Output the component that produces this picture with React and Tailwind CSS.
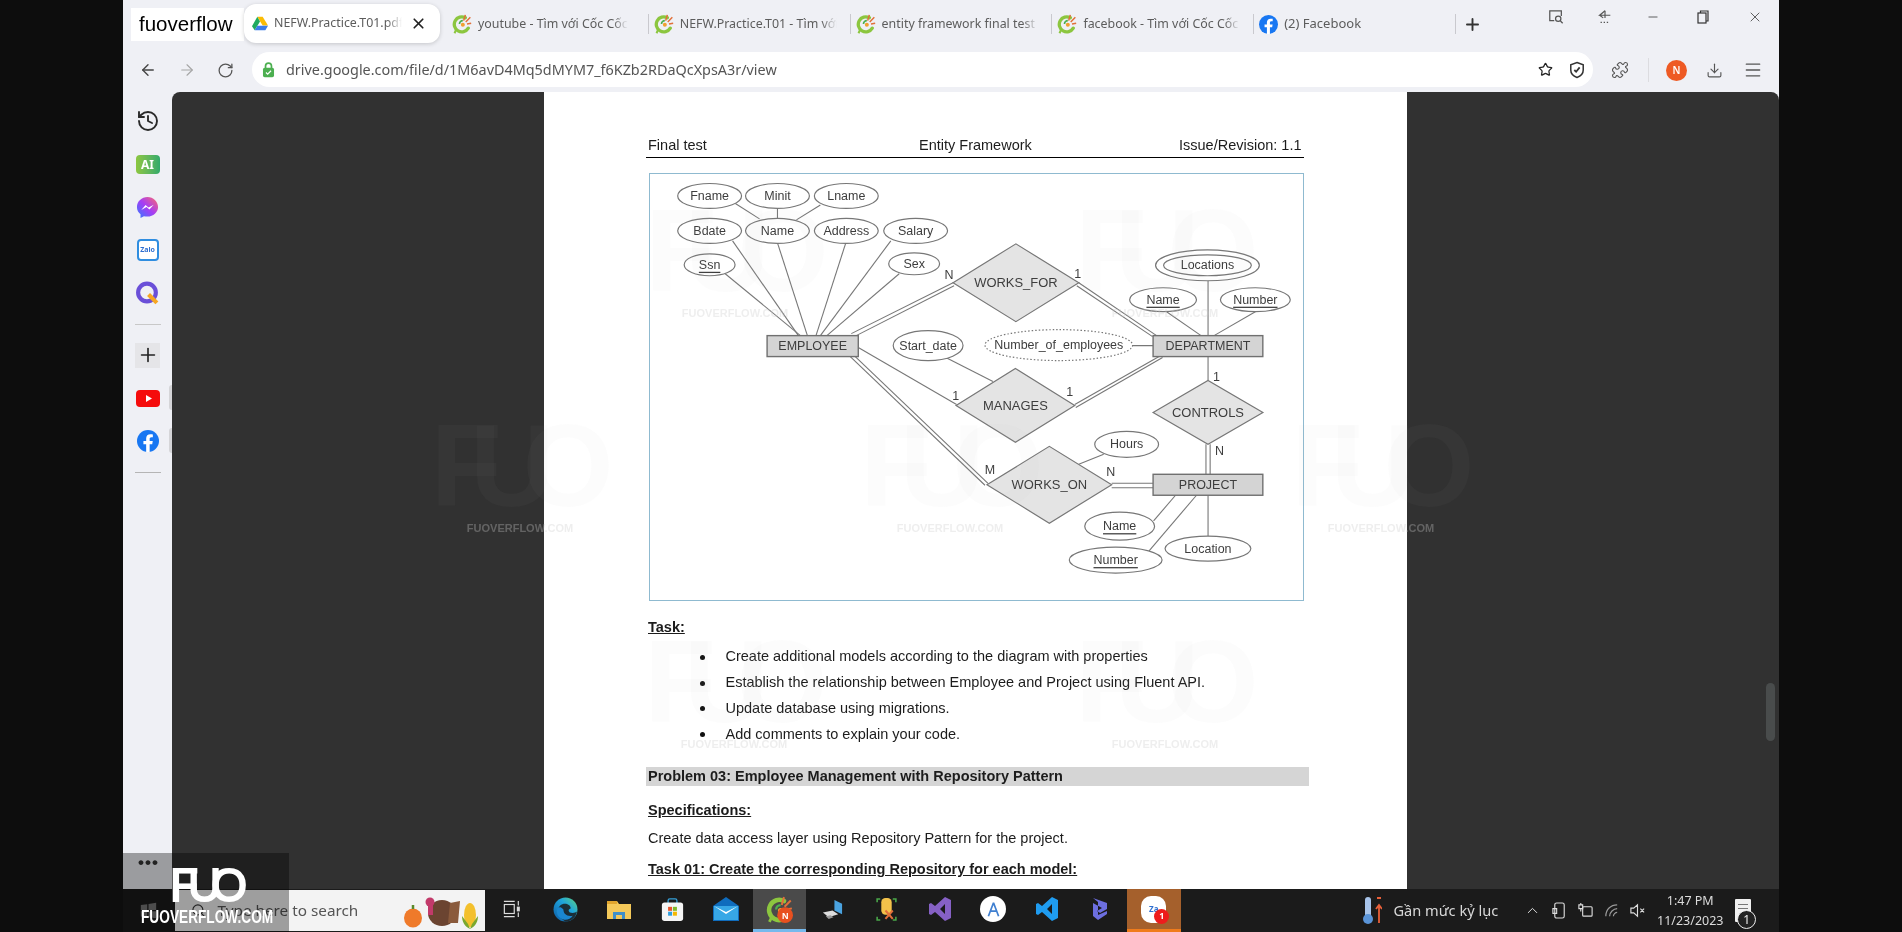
import React from "react";
import {
  ArrowLeft,
  ArrowRight,
  ChevronUp,
  Download,
  History,
  Menu,
  Minus,
  Plus,
  Puzzle,
  RotateCw,
  Search,
  Star,
  X,
} from "lucide-react";

function DriveIcon() {
  return (
    <svg viewBox="0 0 24 22" className="h-[15px] w-[16px] shrink-0">
      <path d="M8 1h8l8 13h-8z" fill="#fbbc04" />
      <path d="M8 1 0 15l4 6 8-13z" fill="#1faa5f" />
      <path d="M8 14.5h16L20 21H4z" fill="#3b7de9" />
    </svg>
  );
}

function CocCocIcon({ badge }) {
  return (
    <svg viewBox="0 0 24 24" className={badge ? "h-[27px] w-[27px]" : "h-[20px] w-[20px] shrink-0"}>
      <path d="M16 4.5A9 9 0 1 0 19.5 17" fill="none" stroke="#8cc63f" strokeWidth="4" strokeLinecap="round" />
      <path d="M9 12a4 4 0 0 1 4-4" fill="none" stroke="#4caf50" strokeWidth="2" />
      <path d="M14 8 16 1M16.5 9.5 22 4M18 12l5-1" stroke="#e2703a" strokeWidth="1.8" />
      <path d="M5 19 3 23" stroke="#8cc63f" strokeWidth="2.5" />
      <circle cx="13" cy="13" r="2.4" fill="#f0a030" />
      {badge && <circle cx="17" cy="17" r="7" fill="#e8501f" />}
      {badge && (
        <text x="17" y="20" textAnchor="middle" fontSize="8" fontWeight="700" fill="#fff" fontFamily="Liberation Sans">
          N
        </text>
      )}
    </svg>
  );
}

function FacebookIcon({ size }) {
  return (
    <svg viewBox="0 0 24 24" className={size}>
      <circle cx="12" cy="12" r="12" fill="#1877f2" />
      <path
        d="M16.6 15.5 17.2 12h-3.4V9.7c0-1 .5-1.9 2-1.9h1.5v-3s-1.4-.2-2.7-.2c-2.8 0-4.6 1.7-4.6 4.7V12H7v3.5h3V24h3.8v-8.5z"
        fill="#fff"
      />
    </svg>
  );
}

function BrowserTab({ icon, title, last }) {
  return (
    <div className="flex h-[38px] w-[201.8px] items-center gap-[6px] border-r border-[#cfcfd4] pl-[5px] pr-[13px] [border-image:linear-gradient(transparent_25%,#c9c9ce_25%,#c9c9ce_75%,transparent_75%)_1]">
      {icon}
      <span
        className={`overflow-hidden whitespace-nowrap text-[12.4px] text-[#5c5c5c] ${
          last ? "text-[13px]" : "[mask-image:linear-gradient(to_right,black_90%,transparent)]"
        }`}
      >
        {title}
      </span>
    </div>
  );
}

function SidebarSlot({ children }) {
  return <div className="flex h-[43px] w-full items-center justify-center">{children}</div>;
}

function TaskIcon({ children, active, orange }) {
  return (
    <div
      className={`flex h-[43px] w-[53.5px] shrink-0 items-center justify-center border-b-[3px] ${
        active ? "border-[#76b9ed] bg-[#4a4a4a]" : orange ? "border-[#f07c1c] bg-[#a5602c]" : "border-transparent"
      }`}
    >
      {children}
    </div>
  );
}

function Label({ x, y, text, underline, size = 12.5 }) {
  return (
    <text
      x={x}
      y={y}
      textAnchor="middle"
      dominantBaseline="central"
      fontSize={size}
      fill="#3d3d3d"
      fontFamily="Liberation Sans"
      textDecoration={underline ? "underline" : undefined}
    >
      {text}
    </text>
  );
}

function Ell({ cx, cy, rx, ry, label, underline, dotted }) {
  return (
    <g>
      <ellipse
        cx={cx}
        cy={cy}
        rx={rx}
        ry={ry}
        fill="#fff"
        stroke="#777"
        strokeWidth="1.2"
        strokeDasharray={dotted ? "1.5 2" : undefined}
      />
      {label && <Label x={cx} y={cy} text={label} underline={underline} />}
    </g>
  );
}

function Box({ x, y, w, h, label }) {
  return (
    <g>
      <rect x={x} y={y} width={w} height={h} fill="#d4d4d4" stroke="#707070" strokeWidth="1.4" />
      <Label x={x + w / 2} y={y + h / 2} text={label} />
    </g>
  );
}

function Diamond({ l, r, t, b, label }) {
  const cx = (l + r) / 2;
  const cy = (t + b) / 2;
  return (
    <g>
      <polygon points={`${l},${cy} ${cx},${t} ${r},${cy} ${cx},${b}`} fill="#e4e4e4" stroke="#777" strokeWidth="1.2" />
      <Label x={cx} y={cy} text={label} size={13} />
    </g>
  );
}

const singleLines = [
  [734, 203, 759, 219],
  [777, 208, 777, 219],
  [820, 205, 796, 220],
  [732, 241, 798, 336],
  [777, 243, 807, 336],
  [845.5, 243, 815.6, 336],
  [890.6, 241, 820, 336],
  [899, 274, 826.5, 336],
  [724.6, 274, 800, 336],
  [858, 348, 956.5, 405],
  [945.7, 358, 993, 382],
  [1132, 346, 1153.5, 346],
  [1208.6, 357, 1208.6, 381],
  [1104, 455, 1079, 465],
  [1176, 496, 1154, 521.7],
  [1197, 496, 1149.5, 551.7],
  [1208.6, 496, 1208.6, 537],
  [1208.6, 281, 1208.6, 336],
  [1167, 312, 1201.6, 336],
  [1256, 312, 1214.6, 336],
];

const doubleLines = [
  [851, 334, 953, 283, 854, 337, 954, 286],
  [1079, 283, 1157, 336, 1077, 286, 1153, 337],
  [1075, 405, 1159.5, 357, 1076, 408, 1163, 358],
  [850, 357, 985, 486, 855, 357, 988, 484],
  [1112, 484, 1153.5, 484, 1112, 488.5, 1153.5, 488.5],
  [1206.5, 445, 1206.5, 475, 1210.7, 445, 1210.7, 475],
];

function ErDiagram() {
  return (
    <svg viewBox="649.5 174 654 427" className="h-full w-full">
      {singleLines.map((l, i) => (
        <line key={i} x1={l[0]} y1={l[1]} x2={l[2]} y2={l[3]} stroke="#777" strokeWidth="1.1" />
      ))}
      {doubleLines.map((l, i) => (
        <g key={i} stroke="#777" strokeWidth="1.1">
          <line x1={l[0]} y1={l[1]} x2={l[2]} y2={l[3]} />
          <line x1={l[4]} y1={l[5]} x2={l[6]} y2={l[7]} />
        </g>
      ))}
      <Ell cx={709} cy={196} rx={32} ry={12.5} label="Fname" />
      <Ell cx={777} cy={196} rx={32} ry={12.5} label="Minit" />
      <Ell cx={846} cy={196} rx={32} ry={12.5} label="Lname" />
      <Ell cx={709} cy={231} rx={32} ry={12.5} label="Bdate" />
      <Ell cx={777} cy={231} rx={32} ry={12.5} label="Name" />
      <Ell cx={846} cy={231} rx={32} ry={12.5} label="Address" />
      <Ell cx={915.5} cy={231} rx={32} ry={12.5} label="Salary" />
      <Ell cx={709} cy={265} rx={25.5} ry={11} label="Ssn" underline />
      <Ell cx={914} cy={264} rx={25.5} ry={11} label="Sex" />
      <Ell cx={1208} cy={265.5} rx={52} ry={15.5} />
      <Ell cx={1208} cy={265.5} rx={44} ry={10.5} label="Locations" />
      <Ell cx={1163.5} cy={300} rx={33.5} ry={12} label="Name" underline />
      <Ell cx={1256} cy={300} rx={35} ry={12} label="Number" underline />
      <Ell cx={928} cy={346} rx={35} ry={15} label="Start_date" />
      <Ell cx={1059} cy={345.5} rx={74} ry={15.5} label="Number_of_employees" dotted />
      <Ell cx={1127} cy={445} rx={32} ry={13} label="Hours" />
      <Ell cx={1120} cy={527} rx={35} ry={14} label="Name" underline />
      <Ell cx={1116} cy={561} rx={46.5} ry={13} label="Number" underline />
      <Ell cx={1208.5} cy={549.5} rx={43} ry={12.5} label="Location" />
      <Box x={766.6} y={336} w={91.4} h={21} label="EMPLOYEE" />
      <Box x={1153.5} y={336} w={110} h={21} label="DEPARTMENT" />
      <Box x={1153.5} y={475} w={110} h={21} label="PROJECT" />
      <Diamond l={953} r={1079} t={244} b={322} label="WORKS_FOR" />
      <Diamond l={956} r={1075} t={369} b={443} label="MANAGES" />
      <Diamond l={1153.5} r={1263.6} t={381} b={445} label="CONTROLS" />
      <Diamond l={987} r={1112} t={447} b={524} label="WORKS_ON" />
      <Label x={949} y={275} text="N" />
      <Label x={1078} y={274} text="1" />
      <Label x={955.7} y={397} text="1" />
      <Label x={1070} y={393} text="1" />
      <Label x={1217} y={377} text="1" />
      <Label x={1220} y={452} text="N" />
      <Label x={990} y={471} text="M" />
      <Label x={1111} y={473} text="N" />
    </svg>
  );
}

function Watermark({ className }) {
  return (
    <div className={`pointer-events-none absolute flex w-[200px] flex-col items-center ${className}`}>
      <span className="-ml-[28px] h-[107px] text-[117px] font-bold leading-[104px] tracking-[-32px] text-[rgba(170,170,170,0.04)] [font-family:'Liberation_Sans']">
        FUO
      </span>
      <span className="text-[11px] font-bold leading-[14px] text-[rgba(203,203,203,0.33)] [font-family:'Liberation_Sans']">
        FUOVERFLOW.COM
      </span>
    </div>
  );
}

const tasks = [
  "Create additional models according to the diagram with properties",
  "Establish the relationship between Employee and Project using Fluent API.",
  "Update database using migrations.",
  "Add comments to explain your code.",
];

export default function App() {
  return (
    <div className="relative h-[932px] w-[1902px] overflow-hidden bg-[#0d0d0d] px-[123px] blur-[0.4px] [font-family:'Noto_Sans',sans-serif]">
      <div className="flex h-full w-[1656px] flex-col bg-[#eff0f5]">
        {/* tab strip */}
        <div className="flex h-[48px] items-start pl-[8px]">
          <div className="mt-[8px] flex h-[33px] w-[113px] items-center bg-white pl-[8px] text-[20.5px] text-black [font-family:'Liberation_Sans']">
            fuoverflow
          </div>
          <div className="mt-[4px] flex h-[39px] w-[196px] shrink-0 items-center gap-[6px] rounded-[12px] bg-white pl-[8px] pr-[13px] shadow-[0_1px_4px_rgba(0,0,0,0.18)]">
            <DriveIcon />
            <span className="w-[128px] overflow-hidden whitespace-nowrap text-[12.4px] text-[#5c5c5c] [mask-image:linear-gradient(to_right,black_88%,transparent)]">
              NEFW.Practice.T01.pdf
            </span>
            <X size={17} strokeWidth={2.4} className="ml-auto text-[#222]" />
          </div>
          <div className="ml-[7px] mt-[5px] flex">
            <BrowserTab icon={<CocCocIcon />} title="youtube - Tìm với Cốc Cốc" />
            <BrowserTab icon={<CocCocIcon />} title="NEFW.Practice.T01 - Tìm với Cốc Cốc" />
            <BrowserTab icon={<CocCocIcon />} title="entity framework final test - Tìm" />
            <BrowserTab icon={<CocCocIcon />} title="facebook - Tìm với Cốc Cốc - Tìm" />
            <BrowserTab icon={<FacebookIcon size="h-[19px] w-[19px] shrink-0" />} title="(2) Facebook" last />
          </div>
          <Plus size={19} strokeWidth={2.4} className="ml-[7px] mt-[15px] text-[#333]" />
          <div className="ml-auto flex h-[33px] items-center text-[#555]">
            <svg viewBox="0 0 18 18" className="mr-[33px] h-[16px] w-[16px]" fill="none" stroke="#555" strokeWidth="1.4">
              <path d="M7 13H2V2h13v6" />
              <circle cx="11.5" cy="11" r="3" />
              <path d="m14 13.5 2.5 2.5" />
            </svg>
            <svg viewBox="0 0 18 18" className="mr-[33px] h-[16px] w-[16px]" fill="none" stroke="#555" strokeWidth="1.3">
              <path d="M9 2 3 7h12M3 7l4 3" />
              <path d="M9 2v8M4 15h1.5m2 0H9m2 0h1.5" />
            </svg>
            <Minus size={14} strokeWidth={1.6} className="mr-[36px]" />
            <svg viewBox="0 0 14 14" className="mr-[37px] h-[14px] w-[14px]" fill="none" stroke="#333" strokeWidth="1.2">
              <rect x="2" y="3" width="8" height="10" />
              <path d="M4.5 3V1H12v10h-2" />
            </svg>
            <X size={16} strokeWidth={1.4} className="mr-[16px]" />
          </div>
        </div>

        {/* toolbar */}
        <div className="flex h-[44px] items-start pl-[16px] pt-[4px]">
          <div className="flex h-[36px] items-center">
            <ArrowLeft size={18} strokeWidth={1.8} className="text-[#444]" />
            <ArrowRight size={18} strokeWidth={1.5} className="ml-[21px] text-[#a5a5a5]" />
            <RotateCw size={17} strokeWidth={1.8} className="ml-[21px] text-[#555]" />
          </div>
          <div className="ml-[18px] flex h-[35px] w-[1341px] items-center rounded-full bg-white pl-[9px] pr-[8px]">
            <svg viewBox="0 0 16 20" className="h-[17px] w-[15px]">
              <path d="M4.5 9V6a3.5 3.5 0 0 1 7 0v3" fill="none" stroke="#4caf50" strokeWidth="2" />
              <rect x="1.5" y="8" width="13" height="11" rx="2" fill="#4caf50" />
              <path d="m5 13.5 2 2 4-4" fill="none" stroke="#fff" strokeWidth="1.4" />
            </svg>
            <span className="ml-[10px] text-[14.4px] text-[#555]">
              drive.google.com/file/d/1M6avD4Mq5dMYM7_f6KZb2RDaQcXpsA3r/view
            </span>
            <Star size={15} strokeWidth={2} className="ml-auto text-[#222]" />
            <svg viewBox="0 0 18 20" className="ml-[16px] h-[18px] w-[16px]" fill="none" stroke="#333" strokeWidth="1.7">
              <path d="M9 1.5 16 4v6c0 4-3 7-7 8.5C5 17 2 14 2 10V4z" />
              <path d="m6 10 2 2 4-5" strokeWidth="2" />
            </svg>
          </div>
          <div className="flex h-[36px] items-center">
            <Puzzle size={18} strokeWidth={1.5} className="ml-[18px] text-[#555]" />
            <div className="ml-[19px] h-[24px] w-px bg-[#dcdce0]" />
            <div className="ml-[17px] flex h-[21px] w-[21px] items-center justify-center rounded-full bg-[#ee5a24] text-[10px] font-semibold text-white">
              N
            </div>
            <Download size={17} strokeWidth={1.6} className="ml-[19px] text-[#555]" />
            <Menu size={20} strokeWidth={1.6} className="ml-[20px] text-[#555]" />
          </div>
        </div>

        {/* main area */}
        <div className="flex h-[797px]">
          <div className="relative flex w-[49px] shrink-0 flex-col items-center pt-[7.5px]">
            <SidebarSlot>
              <History size={24} strokeWidth={1.9} className="text-[#2a2a2a]" />
            </SidebarSlot>
            <SidebarSlot>
              <div className="relative mt-[1px] flex h-[19px] w-[24px] items-center justify-center rounded-[4px] bg-gradient-to-r from-[#8cc63f] to-[#2faa6a] text-[12px] font-bold text-white">
                AI
              </div>
            </SidebarSlot>
            <SidebarSlot>
              <svg viewBox="0 0 24 24" className="h-[23px] w-[23px]">
                <defs>
                  <linearGradient id="msgr" x1="0" y1="1" x2="1" y2="0">
                    <stop offset="0" stopColor="#2f7bff" />
                    <stop offset="0.5" stopColor="#a63df5" />
                    <stop offset="1" stopColor="#ff6a6a" />
                  </linearGradient>
                </defs>
                <path d="M12 1C6 1 1 5.5 1 11.5c0 3.2 1.4 5.8 3.7 7.6V23l3.6-2c1.2.3 2.4.5 3.7.5 6 0 11-4.5 11-10S18 1 12 1z" fill="url(#msgr)" />
                <path d="m5.5 14.5 4.5-5 3 2.5 5.500-3-4.500 5-3-2.500z" fill="#fff" />
              </svg>
            </SidebarSlot>
            <SidebarSlot>
              <div className="flex h-[22px] w-[22px] items-center justify-center rounded-[4px] border-[2.5px] border-[#2f8de0] bg-white text-[7px] font-bold text-[#2f6fd0]">
                Zalo
              </div>
            </SidebarSlot>
            <SidebarSlot>
              <svg viewBox="0 0 24 24" className="h-[25px] w-[25px]">
                <circle cx="11.5" cy="11" r="8.5" fill="none" stroke="#6a4fd8" strokeWidth="4" />
                <path d="m13 13 8 8" stroke="#f6a623" strokeWidth="4" />
              </svg>
            </SidebarSlot>
            <div className="mb-[17.5px] mt-[9.5px] h-px w-[26px] bg-[#c8c8c8]" />
            <div className="flex h-[25px] w-[25px] items-center justify-center bg-[#e5e5e8]">
              <Plus size={22} strokeWidth={1.8} className="text-[#222]" />
            </div>
            <div className="mt-[9px] flex h-[43px] w-full items-center justify-center">
              <svg viewBox="0 0 24 17" className="h-[17px] w-[24px]">
                <rect width="24" height="17" rx="4" fill="#f50c0c" />
                <path d="m10 5 6 3.5-6 3.5z" fill="#fff" />
              </svg>
            </div>
            <SidebarSlot>
              <FacebookIcon size="h-[22px] w-[22px]" />
            </SidebarSlot>
            <div className="mt-[9px] h-px w-[26px] bg-[#b5b5b5]" />
            <div className="absolute left-[46px] top-[293px] h-[25px] w-[3px] rounded-l bg-[#d5d5d8]" />
            <div className="absolute left-[46px] top-[336px] h-[25px] w-[3px] rounded-l bg-[#d5d5d8]" />
          </div>

          <div className="relative flex flex-1 justify-center overflow-hidden rounded-t-[8px] bg-[#313131]">
            <div className="h-full w-[863px] shrink-0 bg-white pl-[102px] pt-[43px] text-[14.5px] text-[#1c1c1c] [font-family:'Liberation_Sans']">
              <div className="w-[665px]">
                <div className="flex h-[23px] w-[657.5px] items-start border-b-[1.5px] border-black px-[2px] leading-[20px]">
                  <span className="w-[271px]">Final test</span>
                  <span>Entity Framework</span>
                  <span className="ml-auto">Issue/Revision: 1.1</span>
                </div>
                <div className="ml-[2.5px] mt-[14.5px] h-[428px] w-[655px] border border-[#8fbad0]">
                  <ErDiagram />
                </div>
                <p className="ml-[2px] mt-[16px] h-[20px] font-bold underline">Task:</p>
                <ul className="mt-[8px]">
                  {tasks.map((item) => (
                    <li key={item} className="flex h-[25.7px] items-center pl-[54px]">
                      <span className="h-[5px] w-[5px] rounded-full bg-[#111]" />
                      <span className="ml-[20.5px]">{item}</span>
                    </li>
                  ))}
                </ul>
                <div className="mt-[20px] flex h-[19px] w-[663px] items-center bg-[#d5d5d5] pl-[2px] font-bold">
                  Problem 03: Employee Management with Repository Pattern
                </div>
                <p className="ml-[2px] mt-[13.5px] h-[20px] font-bold underline">Specifications:</p>
                <p className="ml-[2px] mt-[8.5px] h-[20px]">Create data access layer using Repository Pattern for the project.</p>
                <p className="ml-[2px] mt-[11px] h-[20px] font-bold underline">Task 01: Create the corresponding Repository for each model:</p>
              </div>
            </div>
            <div className="absolute left-[1594px] top-[591px] h-[58px] w-[9px] rounded-full bg-[#494c4c]" />
          </div>
        </div>

        {/* windows taskbar */}
        <div className="flex h-[43px] items-center bg-[#1b1b1b] text-white">
          <div className="flex w-[51.5px] shrink-0 justify-center">
            <svg viewBox="0 0 20 20" className="h-[17px] w-[17px]" fill="#777">
              <path d="M1 3.5 8.5 2.5V9.5H1zM10 2.3 19 1V9.5H10zM1 11h7.5v7L1 17zM10 11h9v8l-9-1.2z" />
            </svg>
          </div>
          <div className="flex h-[41px] w-[310.5px] shrink-0 items-center bg-[#f3f3f3] pl-[16px] text-[15.3px] text-[#555]">
            <Search size={15} strokeWidth={1.8} className="text-[#333]" />
            <span className="ml-[12px] whitespace-nowrap">Type here to search</span>
            <svg viewBox="0 0 86 40" className="ml-auto mr-[5px] h-[40px] w-[86px]">
              <ellipse cx="19" cy="27" rx="9" ry="9.5" fill="#ef7a2a" />
              <path d="M19 18v-4" stroke="#5a8a2a" strokeWidth="2.5" />
              <ellipse cx="48" cy="22" rx="14" ry="13" fill="#6b4431" />
              <path d="M56 12 66 10 64 32 54 32z" fill="#8a5a3c" />
              <circle cx="36" cy="11" r="4.5" fill="#c23a6a" />
              <path d="M34 14h5v10h-5z" fill="#c23a6a" />
              <ellipse cx="76" cy="24" rx="6" ry="12" fill="#f3c02d" />
              <path d="M76 38c-6-3-8-8-8-13l6 8zM76 38c6-3 8-8 8-13l-6 8z" fill="#7aa82f" />
            </svg>
          </div>
          <TaskIcon>
            <svg viewBox="0 0 20 20" className="h-[18px] w-[18px]" fill="none" stroke="#ddd" strokeWidth="1.3">
              <path d="M1 1.5h12M1 18.5h12" />
              <rect x="1.5" y="5" width="11" height="10" />
              <path d="M17 1v5M17 14v5" />
              <rect x="16" y="8" width="2" height="4" fill="#ddd" />
            </svg>
          </TaskIcon>
          <TaskIcon>
            <svg viewBox="0 0 24 24" className="h-[25px] w-[25px]">
              <defs>
                <linearGradient id="edge" x1="0" y1="1" x2="1" y2="0">
                  <stop offset="0" stopColor="#0c59a4" />
                  <stop offset="0.6" stopColor="#1fa5dc" />
                  <stop offset="1" stopColor="#5fd37d" />
                </linearGradient>
              </defs>
              <circle cx="12" cy="12" r="11.5" fill="url(#edge)" />
              <path d="M23 14c-2 2-8 2-8-1 0-1 1-2 2-2 0-3-3-4.5-5.5-4.5C8 6.5 5 9 5 13c0 5 4 9 7 10.5 6 0 10-4 11-9.5z" fill="#1b1b1b" fillOpacity="0.85" />
              <path d="M10 12c0 4 3 7 9 6-2 3-6 4.5-9 3.5C5 20 3 16 4 12c.5-2 3-3.5 6 0z" fill="#1a86d0" />
            </svg>
          </TaskIcon>
          <TaskIcon>
            <svg viewBox="0 0 24 20" className="h-[20px] w-[24px]">
              <path d="M0 2h10l2 3h12v15H0z" fill="#f4c95a" />
              <rect x="0" y="2" width="10" height="3" fill="#e0a52e" />
              <path d="M6 20v-7h12v7h-3v-4H9v4z" fill="#3f8fc8" />
            </svg>
          </TaskIcon>
          <TaskIcon>
            <svg viewBox="0 0 26 28" className="h-[25px] w-[23px]">
              <path d="M8 7V4a2 2 0 0 1 2-2h6a2 2 0 0 1 2 2v3" fill="none" stroke="#35a0d8" strokeWidth="1.5" />
              <rect x="1" y="6" width="24" height="21" rx="3" fill="#f5f5f5" />
              <rect x="8" y="11" width="4.5" height="4.5" fill="#e8542a" />
              <rect x="13.5" y="11" width="4.5" height="4.5" fill="#7fba2a" />
              <rect x="8" y="16.5" width="4.5" height="4.5" fill="#2f9fe0" />
              <rect x="13.5" y="16.5" width="4.5" height="4.5" fill="#f5b800" />
            </svg>
          </TaskIcon>
          <TaskIcon>
            <svg viewBox="0 0 26 24" className="h-[24px] w-[26px]">
              <path d="M13 0 26 9v15H0V9z" fill="#0f6cbd" />
              <path d="M1 9h24v14H1z" fill="#37a7e6" />
              <path d="m1 9 12 8 12-8-12 6z" fill="#fff" />
            </svg>
          </TaskIcon>
          <TaskIcon active>
            <CocCocIcon badge />
          </TaskIcon>
          <TaskIcon>
            <svg viewBox="0 0 24 24" className="h-[23px] w-[23px]">
              <path d="M14 2 22 6v11L14 13z" fill="#4aa3e0" />
              <path d="M2 15l10-2 6 4-10 3z" fill="#ddd" />
              <path d="M5 19l5-1 3 2-5 2z" fill="#999" />
            </svg>
          </TaskIcon>
          <TaskIcon>
            <svg viewBox="0 0 24 24" className="h-[25px] w-[25px]" fill="none">
              <rect x="7" y="1" width="10" height="16" rx="4" fill="#f3c24a" />
              <path d="M3 5V2h3M3 19v3h3M21 5V2h-3M21 19v3h-3" stroke="#4aa84a" strokeWidth="1.5" />
              <path d="m11 13 7 8M18 13l-7 8" stroke="#e2703a" strokeWidth="2" />
            </svg>
          </TaskIcon>
          <TaskIcon>
            <svg viewBox="0 0 24 26" className="h-[26px] w-[24px]">
              <path d="M17 1 23 4v18l-6 3-10-9-4 3-2-1V8l2-1 4 3zM17 8l-5 5 5 5z" fill="#8661c5" />
            </svg>
          </TaskIcon>
          <TaskIcon>
            <div className="flex h-[26px] w-[26px] items-center justify-center rounded-full bg-white">
              <svg viewBox="0 0 20 20" className="h-[17px] w-[17px]" fill="none" stroke="#3f7fd0" strokeWidth="2">
                <path d="M10 2 4 18M10 2l6 16M6 12h8" />
              </svg>
            </div>
          </TaskIcon>
          <TaskIcon>
            <svg viewBox="0 0 24 26" className="h-[26px] w-[24px]">
              <path d="M17 1 23 4v18l-6 3-10-9-4 3-2-1V8l2-1 4 3zM17 8l-5 5 5 5z" fill="#1f9cf0" />
            </svg>
          </TaskIcon>
          <TaskIcon>
            <svg viewBox="0 0 24 26" className="h-[26px] w-[24px]">
              <path d="M5 2 19 7v6l-7 4-3-2 5-3-9-5zM5 2v18l5 4 9-6v-3l-9 4V6z" fill="#6d6fe0" />
            </svg>
          </TaskIcon>
          <TaskIcon orange>
            <div className="relative flex h-[27px] w-[25px] items-center justify-center rounded-[10px] bg-white text-[8px] font-bold text-[#2f6fd0]">
              Za
              <span className="absolute -bottom-[1px] -right-[3px] flex h-[15px] w-[15px] items-center justify-center rounded-full bg-[#ee1c1c] text-[9px] text-white">
                1
              </span>
            </div>
          </TaskIcon>
          <svg viewBox="0 0 20 30" className="ml-[181px] h-[30px] w-[20px]">
            <rect x="3" y="1" width="6" height="20" rx="3" fill="#a8c4ea" />
            <circle cx="6" cy="23" r="5" fill="#5a94d8" />
            <path d="M15 2h4M17 27V9m-3 4 3-4 3 4" stroke="#e8603a" strokeWidth="1.8" fill="none" />
          </svg>
          <span className="ml-[12px] whitespace-nowrap text-[14.6px] text-[#d8d8d8]">Gần mức kỷ lục</span>
          <ChevronUp size={17} strokeWidth={1.4} className="ml-[26px] text-[#ddd]" />
          <svg viewBox="0 0 18 18" className="ml-[10px] h-[17px] w-[17px]" fill="none" stroke="#ddd" strokeWidth="1.2">
            <rect x="4" y="1" width="10" height="16" rx="2" />
            <path d="M2 7h4v5H2z" />
          </svg>
          <svg viewBox="0 0 18 18" className="ml-[9px] h-[17px] w-[17px]" fill="none" stroke="#ddd" strokeWidth="1.2">
            <rect x="6" y="5" width="10" height="10" rx="1" />
            <path d="M2 3v4h4V3zM4 1v2M4 7v3" />
          </svg>
          <svg viewBox="0 0 18 18" className="ml-[9px] h-[17px] w-[17px]" fill="none" stroke="#999" strokeWidth="1.3">
            <path d="M3 15C3 8 8 3 15 3M7 15c0-4 4-8 8-8M11 15c0-2 2-4 4-4" />
          </svg>
          <svg viewBox="0 0 18 18" className="ml-[9px] h-[17px] w-[17px]" fill="none" stroke="#ddd" strokeWidth="1.2">
            <path d="M2 6.5h3L9 3v12l-4-3.5H2zM12 7l4 4M16 7l-4 4" />
          </svg>
          <div className="ml-[11px] flex w-[66px] flex-col items-center text-[12.5px] leading-[20px] text-[#dcdcdc]">
            <span>1:47 PM</span>
            <span>11/23/2023</span>
          </div>
          <div className="relative ml-[12px] h-[23px] w-[16px] rounded-[1px] bg-[#f0f0f0]">
            <div className="mx-[3px] mt-[5px] h-px bg-[#777]" />
            <div className="mx-[3px] mt-[3px] h-px bg-[#777]" />
            <span className="absolute -bottom-[7px] left-[2px] flex h-[19px] w-[19px] items-center justify-center rounded-full border border-[#eee] bg-[#222] text-[12px] text-[#eee]">
              1
            </span>
          </div>
        </div>
      </div>

      {/* watermark layer */}
      <Watermark className="left-[635px] top-[199px]" />
      <Watermark className="left-[1065px] top-[199px]" />
      <Watermark className="left-[420px] top-[414px]" />
      <Watermark className="left-[850px] top-[414px]" />
      <Watermark className="left-[1281px] top-[414px]" />
      <Watermark className="left-[634px] top-[630px]" />
      <Watermark className="left-[1065px] top-[630px]" />

      {/* player overlay in the corner */}
      <div className="absolute left-[123px] top-[853px] h-[79px] w-[166px] bg-black/35">
        <span className="absolute left-[15px] top-[6px] text-[17px] font-bold leading-[8px] tracking-[1px] text-[#222] [font-family:'Liberation_Sans']">
          •••
        </span>
        <span className="absolute left-[47px] top-[9px] text-[46px] leading-[46px] tracking-[-10px] text-white [-webkit-text-stroke:2px_white] [font-family:'Liberation_Sans']">
          FUO
        </span>
        <span className="absolute left-[18px] top-[54px] origin-left scale-x-[0.72] whitespace-nowrap text-[19px] font-bold leading-[20px] text-white [font-family:'Liberation_Sans']">
          FUOVERFLOW.COM
        </span>
      </div>
    </div>
  );
}
